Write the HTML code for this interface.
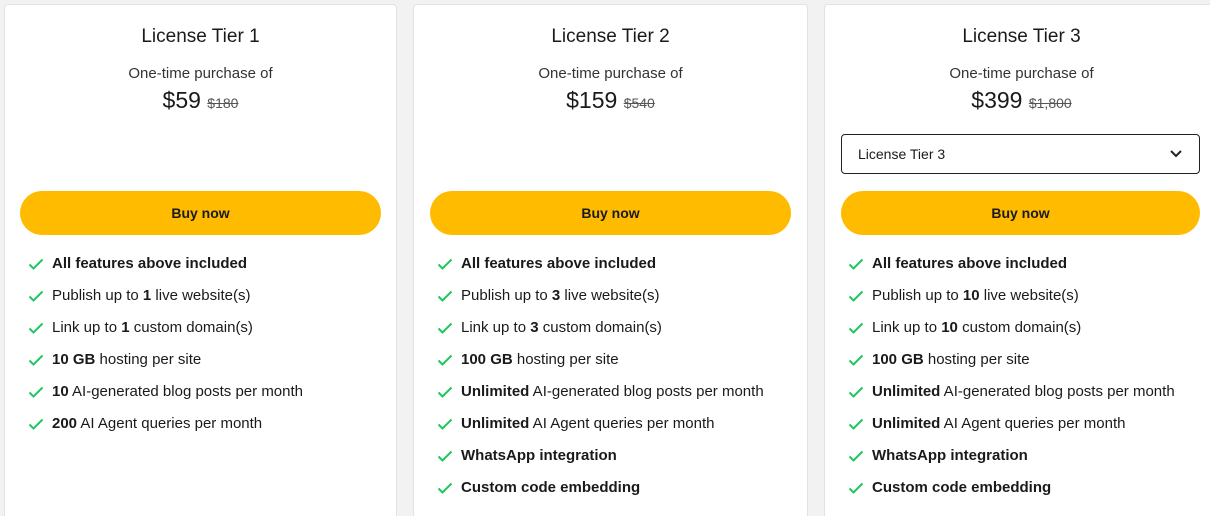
<!DOCTYPE html>
<html style="height:516px;overflow:hidden"><head><style>
body{margin:0;width:1210px;height:516px;background:#f2f2f2;font-family:"Liberation Sans",sans-serif;color:#1a1a1a;overflow:hidden;position:relative}
.card{position:absolute;top:4px;height:520px;background:#fff;border:1px solid #e2e2e2;border-radius:4px;box-sizing:border-box}
.t{position:absolute;top:21px;left:0;right:0;text-align:center;font-size:19px}
.s{position:absolute;top:60px;left:0;right:0;text-align:center;font-size:15px;color:#333}
.p{position:absolute;top:82px;left:0;right:0;text-align:center;font-size:23px}
.p del{font-size:14px;color:#555;margin-left:0}
.b{position:absolute;top:186px;left:15px;right:15px;height:44px;border-radius:22px;background:#ffbb00;text-align:center;line-height:44px;font-size:14px;font-weight:bold}
.sel{position:absolute;top:129px;left:16px;right:18px;height:40px;border:1px solid #222;border-radius:4px;box-sizing:border-box;font-size:14px;line-height:38px;padding-left:16px}
.sel svg{position:absolute;right:16px;top:14px}
ul{position:absolute;top:249px;left:22px;margin:0;padding:0;list-style:none}
li{height:32px;font-size:15px;position:relative;padding-left:25px;line-height:20px}
li svg{position:absolute;left:1px;top:4px}
</style></head><body>
<svg width="0" height="0" style="position:absolute"><defs><symbol id="c" viewBox="0 0 16 12"><path d="M1.5 6.5l4 4L14.5 1.5" fill="none" stroke="#22c55e" stroke-width="2"/></symbol></defs></svg>

<div class="card" style="left:4px;width:393px">
<div class="t">License Tier 1</div><div class="s">One-time purchase of</div>
<div class="p">$59 <del>$180</del></div>
<div class="b">Buy now</div>
<ul>
<li><svg width="16" height="12"><use href="#c"/></svg><b>All features above included</b></li>
<li><svg width="16" height="12"><use href="#c"/></svg>Publish up to <b>1</b> live website(s)</li>
<li><svg width="16" height="12"><use href="#c"/></svg>Link up to <b>1</b> custom domain(s)</li>
<li><svg width="16" height="12"><use href="#c"/></svg><b>10 GB</b> hosting per site</li>
<li><svg width="16" height="12"><use href="#c"/></svg><b>10</b> AI-generated blog posts per month</li>
<li><svg width="16" height="12"><use href="#c"/></svg><b>200</b> AI Agent queries per month</li>
</ul></div>

<div class="card" style="left:413px;width:395px">
<div class="t">License Tier 2</div><div class="s">One-time purchase of</div>
<div class="p">$159 <del>$540</del></div>
<div class="b" style="left:16px;right:16px">Buy now</div>
<ul>
<li><svg width="16" height="12"><use href="#c"/></svg><b>All features above included</b></li>
<li><svg width="16" height="12"><use href="#c"/></svg>Publish up to <b>3</b> live website(s)</li>
<li><svg width="16" height="12"><use href="#c"/></svg>Link up to <b>3</b> custom domain(s)</li>
<li><svg width="16" height="12"><use href="#c"/></svg><b>100 GB</b> hosting per site</li>
<li><svg width="16" height="12"><use href="#c"/></svg><b>Unlimited</b> AI-generated blog posts per month</li>
<li><svg width="16" height="12"><use href="#c"/></svg><b>Unlimited</b> AI Agent queries per month</li>
<li><svg width="16" height="12"><use href="#c"/></svg><b>WhatsApp integration</b></li>
<li><svg width="16" height="12"><use href="#c"/></svg><b>Custom code embedding</b></li>
</ul></div>

<div class="card" style="left:824px;width:395px">
<div class="t" style="right:0">License Tier 3</div><div class="s" style="right:0">One-time purchase of</div>
<div class="p" style="right:0">$399 <del>$1,800</del></div>
<div class="sel">License Tier 3<svg width="14" height="10" viewBox="0 0 14 10"><path d="M2 2l5 5 5-5" fill="none" stroke="#222" stroke-width="2"/></svg></div>
<div class="b" style="left:16px;right:18px">Buy now</div>
<ul>
<li><svg width="16" height="12"><use href="#c"/></svg><b>All features above included</b></li>
<li><svg width="16" height="12"><use href="#c"/></svg>Publish up to <b>10</b> live website(s)</li>
<li><svg width="16" height="12"><use href="#c"/></svg>Link up to <b>10</b> custom domain(s)</li>
<li><svg width="16" height="12"><use href="#c"/></svg><b>100 GB</b> hosting per site</li>
<li><svg width="16" height="12"><use href="#c"/></svg><b>Unlimited</b> AI-generated blog posts per month</li>
<li><svg width="16" height="12"><use href="#c"/></svg><b>Unlimited</b> AI Agent queries per month</li>
<li><svg width="16" height="12"><use href="#c"/></svg><b>WhatsApp integration</b></li>
<li><svg width="16" height="12"><use href="#c"/></svg><b>Custom code embedding</b></li>
</ul></div>
</body></html>
